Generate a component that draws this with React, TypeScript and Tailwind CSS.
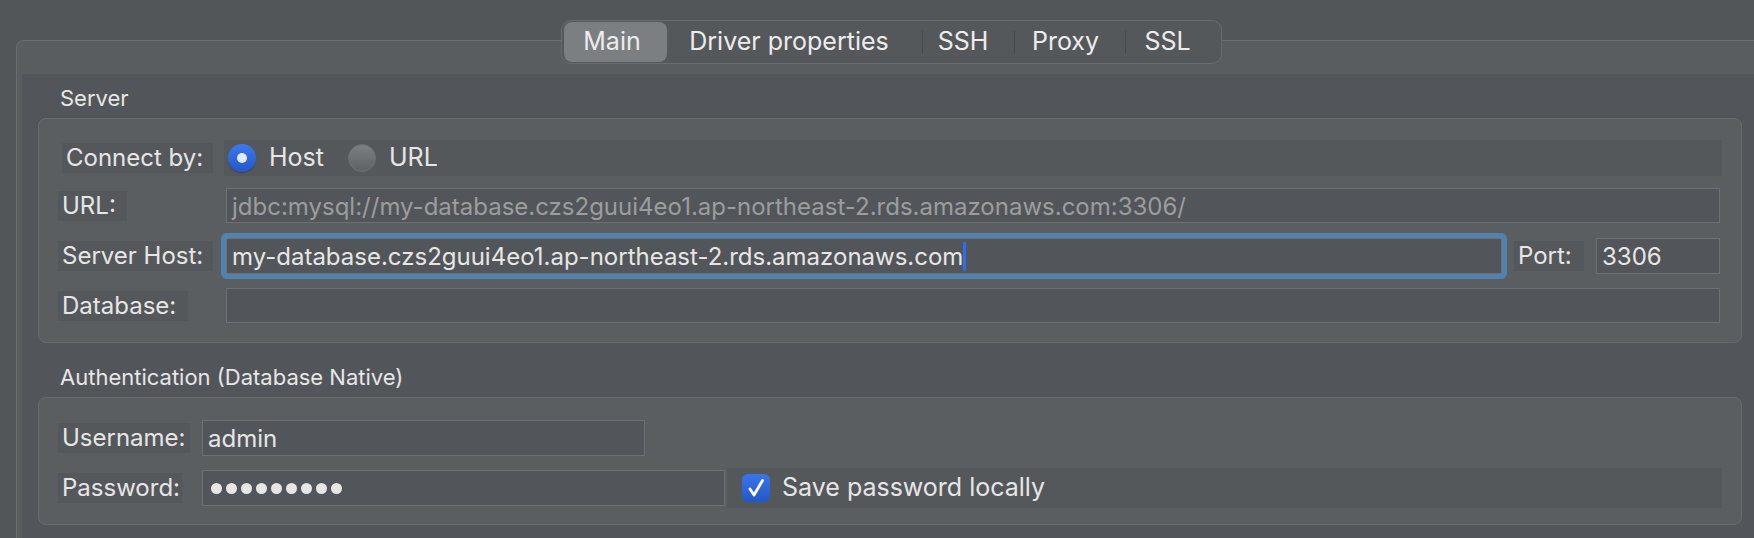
const rowText = "text-[24px] text-[#e6e6e6]";

function Sep() {
  return <span className="h-[23px] w-px shrink-0 bg-[#45494c]" />;
}

function TabBar() {
  return (
    <div className="flex h-[44px] w-[661px] items-center rounded-[10px] border border-[#686c6f] bg-[#54585b] px-px text-[25px] text-[#ececec]">
      <div className="ml-px flex h-[40px] w-[103px] items-center justify-center rounded-[8px] bg-[#7c7f82] pr-[6px]">
        Main
      </div>
      <div className="flex w-[255px] justify-center pr-[10px]">Driver properties</div>
      <Sep />
      <div className="flex w-[91px] justify-center pr-[10px]">SSH</div>
      <Sep />
      <div className="flex w-[110px] justify-center pr-[8px]">Proxy</div>
      <Sep />
      <div className="flex w-[94px] justify-center pr-[10px]">SSL</div>
    </div>
  );
}

function Label({ className, children }: { className: string; children: React.ReactNode }) {
  return (
    <div className={`flex h-[30px] shrink-0 items-center bg-[#54585b] pl-[4px] ${rowText} ${className}`}>
      {children}
    </div>
  );
}

function Field({ className, children }: { className: string; children?: React.ReactNode }) {
  return (
    <div
      className={`flex items-center border border-[#6c7073] bg-[#52565a] pl-[5px] pt-[2px] ${rowText} ${className}`}
    >
      {children}
    </div>
  );
}

function Radio({ checked }: { checked?: boolean }) {
  if (checked) {
    return (
      <span className="flex h-[28px] w-[28px] shrink-0 items-center justify-center rounded-full bg-gradient-to-b from-[#3d79ee] to-[#2456c7] shadow-[0_1px_1px_rgba(0,0,0,0.25)]">
        <span className="h-[10px] w-[10px] rounded-full bg-[#e2eaf8]" />
      </span>
    );
  }
  return (
    <span className="block h-[28px] w-[28px] shrink-0 rounded-full border border-[#6e7174] bg-gradient-to-b from-[#7d8083] to-[#5f6265]" />
  );
}

function GroupTitle({ children }: { children: React.ReactNode }) {
  return <div className="ml-[22px] text-[22px] leading-[26px] text-[#e6e6e6]">{children}</div>;
}

function Group({ className, children }: { className: string; children: React.ReactNode }) {
  return (
    <div className={`w-[1704px] rounded-[8px] border border-[#686c6f] bg-[#5a5e61] pl-[19px] pr-[21px] ${className}`}>
      {children}
    </div>
  );
}

export default function App() {
  return (
    <div className="h-[538px] w-[1754px] overflow-hidden bg-[#525659] pl-[16px] pt-[20px] font-[Inter,sans-serif]">
      <div className="w-[1750px]">
        <div className="relative z-10 flex justify-center">
          <TabBar />
        </div>

        <div className="-mt-[24px] h-[520px] rounded-tl-[8px] border-l border-t border-[#6a6e71] bg-[#595d60] pl-[5px] pt-[33px]">
          <div className="h-full bg-[#52565a] pl-[16px] pt-[11px]">
            <GroupTitle>Server</GroupTitle>
            <Group className="mt-[7px] pb-[19px] pt-[21px]">
              {/* connect by */}
              <div className="flex h-[36px] items-center">
                <Label className="ml-[4px] w-[151px]">Connect by:</Label>
                <div className="-mr-[2px] ml-[11px] flex h-[36px] flex-1 items-center bg-[#54585b] pl-[4px] text-[25px] text-[#e6e6e6]">
                  <Radio checked />
                  <span className="ml-[13px]">Host</span>
                  <span className="ml-[24px] flex">
                    <Radio />
                  </span>
                  <span className="ml-[13px]">URL</span>
                </div>
              </div>

              <div className="mt-[12px] flex h-[35px] items-center">
                <div className="w-[168px] shrink-0">
                  <Label className="w-[69px]">URL:</Label>
                </div>
                <Field className="h-[35px] flex-1 !text-[#9b9d9f]">
                  jdbc:mysql://my-database.czs2guui4eo1.ap-northeast-2.rds.amazonaws.com:3306/
                </Field>
              </div>

              <div className="mt-[15px] flex h-[36px] items-center">
                <div className="w-[168px] shrink-0">
                  <Label className="w-[155px]">Server Host:</Label>
                </div>
                <Field className="h-[36px] flex-1 rounded-[2px] shadow-[0_0_0_5px_#5282ae]">
                  my-database.czs2guui4eo1.ap-northeast-2.rds.amazonaws.com
                  <span className="-mt-[2px] h-[29px] w-[3px] rounded-[1px] bg-[#2f6cf2]" />
                </Field>
                <Label className="ml-[12px] w-[70px]">Port:</Label>
                <Field className="ml-[12px] h-[36px] w-[124px]">3306</Field>
              </div>

              <div className="mt-[14px] flex h-[35px] items-center">
                <div className="w-[168px] shrink-0">
                  <Label className="w-[130px]">Database:</Label>
                </div>
                <Field className="h-[35px] flex-1" />
              </div>
            </Group>

            <div className="mt-[21px]">
              <GroupTitle>Authentication (Database Native)</GroupTitle>
            </div>
            <Group className="mt-[7px] pb-[16px] pt-[22px]">
              <div className="flex h-[36px] items-center">
                <div className="w-[144px] shrink-0">
                  <Label className="w-[132px]">Username:</Label>
                </div>
                <Field className="h-[36px] w-[443px]">admin</Field>
              </div>

              <div className="mt-[12px] flex h-[40px] items-center">
                <div className="w-[144px] shrink-0">
                  <Label className="w-[124px]">Password:</Label>
                </div>
                <Field className="h-[36px] w-[523px] gap-[4px] pl-[8px]">
                  {Array.from({ length: 9 }).map((_, i) => (
                    <span key={i} className="-mt-[2px] h-[11px] w-[11px] rounded-full bg-[#e6e6e6]" />
                  ))}
                </Field>
                <div className="-mr-[2px] ml-[2px] flex h-[40px] flex-1 items-center bg-[#54585b] pl-[15px]">
                  <span className="flex h-[28px] w-[28px] items-center justify-center rounded-[6px] bg-gradient-to-b from-[#3a75ea] to-[#2457c8]">
                    <svg width="28" height="28" viewBox="0 0 28 28" fill="none">
                      <path
                        d="M8 15 L12 21 L20.5 6.5"
                        stroke="#ffffff"
                        strokeWidth="2.8"
                        strokeLinecap="round"
                        strokeLinejoin="round"
                      />
                    </svg>
                  </span>
                  <span className="ml-[12px] text-[25px] text-[#e6e6e6]">Save password locally</span>
                </div>
              </div>
            </Group>
          </div>
        </div>
      </div>
    </div>
  );
}
